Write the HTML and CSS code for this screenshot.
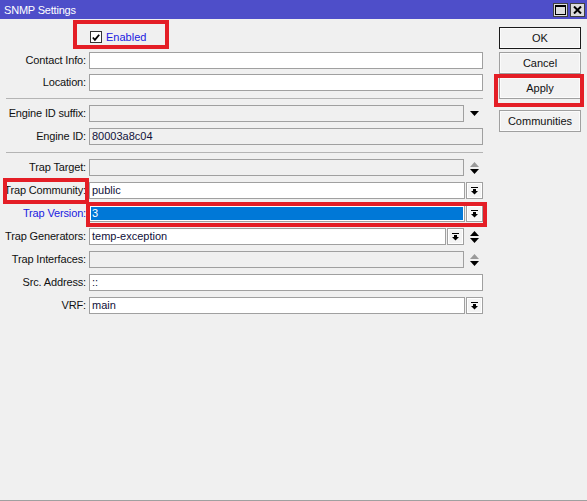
FILE: index.html
```html
<!DOCTYPE html>
<html>
<head>
<meta charset="utf-8">
<link rel="stylesheet" href="styles.css">
</head>
<body>
<div class="window">
  <div class="titlebar">
    <span class="title">SNMP Settings</span>
    <div class="tb-buttons">
      <span class="tb-btn"><svg width="11" height="10" viewBox="0 0 11 10"><rect x="0.5" y="0.5" width="10" height="9" fill="none" stroke="#000"/><rect x="0" y="0" width="11" height="2" fill="#000"/></svg></span>
      <span class="tb-btn"><svg width="9" height="8" viewBox="0 0 9 8"><path d="M1 0.5 L8 7.5 M8 0.5 L1 7.5" stroke="#000" stroke-width="2"/></svg></span>
    </div>
  </div>
  <div class="body">
    <div class="form">
      <div class="enabled-row">
        <span class="checkbox"><svg width="11" height="11" viewBox="0 0 11 11"><path d="M2 5.5 L4.3 8 L9 2.5" fill="none" stroke="#000" stroke-width="2"/></svg></span>
        <span class="enabled-label">Enabled</span>
      </div>
      <div class="group g1">
        <div class="lbl">Contact Info:</div>
        <div class="field"><div class="input"></div></div>
        <div class="lbl">Location:</div>
        <div class="field"><div class="input"></div></div>
      </div>
      <div class="sep"></div>
      <div class="group">
        <div class="lbl">Engine ID suffix:</div>
        <div class="field"><div class="input disabled"></div><span class="zone"><svg width="9" height="5" viewBox="0 0 9 5"><polygon points="0,0 9,0 4.5,5" fill="#000"/></svg></span></div>
        <div class="lbl">Engine ID:</div>
        <div class="field"><div class="input disabled">80003a8c04</div></div>
      </div>
      <div class="sep"></div>
      <div class="group">
        <div class="lbl">Trap Target:</div>
        <div class="field"><div class="input disabled"></div><span class="zone"><svg width="9" height="12" viewBox="0 0 9 12"><polygon points="4.5,0 9,5 0,5" fill="#9a9a9a"/><polygon points="0,7 9,7 4.5,12" fill="#000"/></svg></span></div>
        <div class="lbl">Trap Community:</div>
        <div class="field"><div class="input">public</div><span class="dd"><svg width="7" height="8" viewBox="0 0 7 8"><rect x="0" y="0" width="7" height="1" fill="#000"/><rect x="2" y="2" width="3" height="2" fill="#000"/><polygon points="0,4 7,4 3.5,7.5" fill="#000"/></svg></span></div>
        <div class="lbl blue">Trap Version:</div>
        <div class="field"><div class="input selected"><span class="sel">3</span></div><span class="dd"><svg width="7" height="8" viewBox="0 0 7 8"><rect x="0" y="0" width="7" height="1" fill="#000"/><rect x="2" y="2" width="3" height="2" fill="#000"/><polygon points="0,4 7,4 3.5,7.5" fill="#000"/></svg></span></div>
        <div class="lbl">Trap Generators:</div>
        <div class="field"><div class="input">temp-exception</div><span class="dd"><svg width="7" height="8" viewBox="0 0 7 8"><rect x="0" y="0" width="7" height="1" fill="#000"/><rect x="2" y="2" width="3" height="2" fill="#000"/><polygon points="0,4 7,4 3.5,7.5" fill="#000"/></svg></span><span class="zone"><svg width="9" height="12" viewBox="0 0 9 12"><polygon points="4.5,0 9,5 0,5" fill="#000"/><polygon points="0,7 9,7 4.5,12" fill="#000"/></svg></span></div>
        <div class="lbl">Trap Interfaces:</div>
        <div class="field"><div class="input disabled"></div><span class="zone"><svg width="9" height="12" viewBox="0 0 9 12"><polygon points="4.5,0 9,5 0,5" fill="#9a9a9a"/><polygon points="0,7 9,7 4.5,12" fill="#000"/></svg></span></div>
        <div class="lbl">Src. Address:</div>
        <div class="field"><div class="input">::</div></div>
        <div class="lbl">VRF:</div>
        <div class="field"><div class="input">main</div><span class="dd"><svg width="7" height="8" viewBox="0 0 7 8"><rect x="0" y="0" width="7" height="1" fill="#000"/><rect x="2" y="2" width="3" height="2" fill="#000"/><polygon points="0,4 7,4 3.5,7.5" fill="#000"/></svg></span></div>
      </div>
    </div>
    <div class="buttons">
      <div class="btn default">OK</div>
      <div class="btn">Cancel</div>
      <div class="btn">Apply</div>
      <div class="btn gap">Communities</div>
    </div>
  </div>
  <div class="mark mark-enabled"></div>
  <div class="mark mark-community"></div>
  <div class="mark mark-version"></div>
  <div class="mark mark-apply"></div>
</div>
</body>
</html>
```
FILE: styles.css
```css
html, body {
  margin: 0;
  padding: 0;
}
body {
  background: #f0f0f0;
  font-family: "Liberation Sans", Arial, sans-serif;
  font-size: 11px;
  color: #000;
}
.window {
  position: relative;
  width: 587px;
  height: 501px;
  box-sizing: border-box;
  border-bottom: 1px solid #a0a0a0;
  background: #f0f0f0;
  overflow: hidden;
}
.titlebar {
  height: 19px;
  background: #4e4ec9;
  display: flex;
  align-items: center;
  justify-content: space-between;
  padding: 0 2px 0 4px;
}
.title {
  color: #fff;
  font-size: 11px;
  letter-spacing: -0.2px;
}
.tb-buttons {
  display: flex;
  gap: 2px;
  margin-top: 1px;
}
.tb-btn {
  width: 15px;
  height: 14px;
  box-sizing: border-box;
  background: #dcdcdc;
  border: 1px solid #404040;
  display: flex;
  align-items: center;
  justify-content: center;
}
.body {
  display: flex;
  padding-top: 8px;
}
.form {
  width: 483px;
}
.enabled-row {
  height: 20px;
  margin: 0 0 5px 90px;
  display: flex;
  align-items: center;
  gap: 4px;
}
.checkbox {
  width: 12px;
  height: 12px;
  box-sizing: border-box;
  border: 1px solid #333;
  background: #fff;
  display: flex;
  align-items: center;
  justify-content: center;
}
.enabled-label {
  color: #2020e0;
}
.group {
  display: grid;
  grid-template-columns: 86px 394px;
  column-gap: 3px;
  row-gap: 6px;
  align-items: center;
}
.g1 {
  row-gap: 5px;
}
.lbl {
  text-align: right;
  white-space: nowrap;
  line-height: 17px;
  color: #111;
  letter-spacing: -0.15px;
}
.lbl.blue {
  color: #2020e0;
}
.field {
  display: flex;
  align-items: center;
  height: 17px;
}
.input {
  flex: 1;
  height: 17px;
  box-sizing: border-box;
  border: 1px solid #a0a0a0;
  background: #fff;
  padding-left: 2px;
  line-height: 15px;
  color: #10103a;
  white-space: nowrap;
}
.input.disabled {
  background: #f0f0f0;
}
.input.selected {
  padding: 1px;
  line-height: 13px;
}
.sel {
  display: block;
  height: 13px;
  background: #0078d7;
  color: #fff;
  padding-left: 1px;
}
.dd {
  width: 17px;
  height: 17px;
  margin-left: 1px;
  box-sizing: border-box;
  border: 1px solid #a0a0a0;
  background: #f4f4f4;
  box-shadow: inset 0 0 0 1px #fff;
  display: flex;
  align-items: center;
  justify-content: center;
}
.zone {
  width: 18px;
  margin-left: 1px;
  display: flex;
  justify-content: center;
  padding-left: 1px;
  box-sizing: border-box;
}
.sep {
  height: 1px;
  background: #b4b4b4;
  margin: 7px 0 6px 6px;
}
.buttons {
  margin-left: 16px;
  width: 82px;
  display: flex;
  flex-direction: column;
}
.btn {
  height: 22px;
  box-sizing: border-box;
  border: 1px solid #a0a0a0;
  background: #f2f2f2;
  box-shadow: inset 0 0 0 1px #fbfbfb;
  display: flex;
  align-items: center;
  justify-content: center;
  margin-bottom: 3px;
  color: #111;
}
.btn.default {
  border-color: #1a1a1a;
}
.btn.gap {
  margin-top: 8px;
}
.mark {
  position: absolute;
  box-sizing: border-box;
  border: 4px solid #e41e26;
  pointer-events: none;
}
.mark-enabled {
  left: 73px;
  top: 20px;
  width: 96px;
  height: 29px;
}
.mark-community {
  left: 3px;
  top: 178px;
  width: 86px;
  height: 26px;
}
.mark-version {
  left: 86px;
  top: 202px;
  width: 401px;
  height: 25px;
}
.mark-apply {
  left: 494px;
  top: 74px;
  width: 90px;
  height: 33px;
}
```
